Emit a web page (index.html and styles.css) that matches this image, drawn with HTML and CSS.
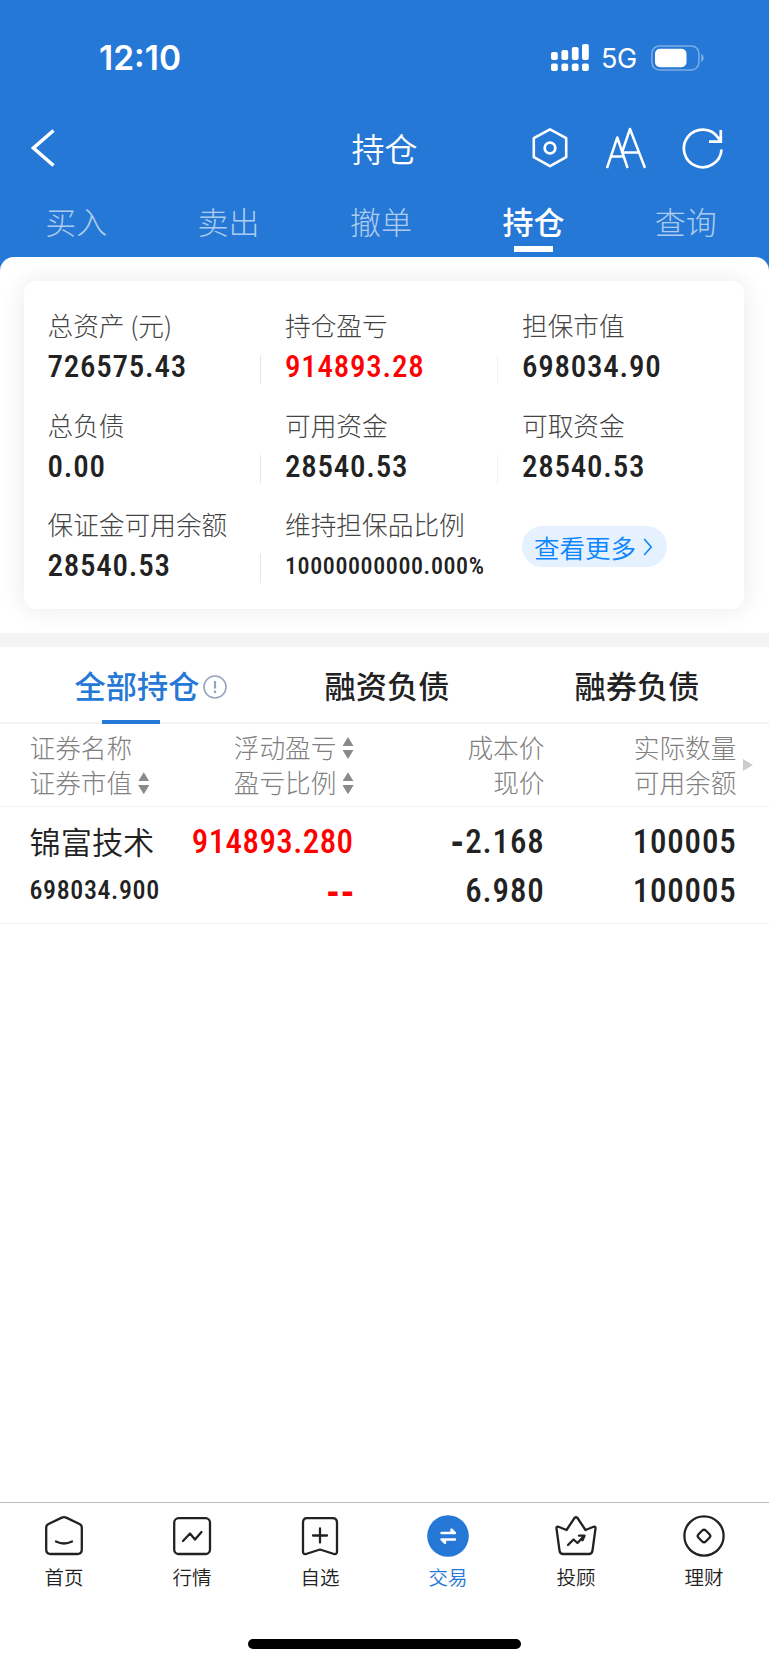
FILE: index.html
```
<!doctype html>
<html lang="zh-CN">
<head>
<meta charset="utf-8">
<meta name="viewport" content="width=device-width, initial-scale=1">
<title>持仓</title>
<link rel="stylesheet" href="styles.css">
</head>
<body>
<div class="app">
    <header class="header">
        <div class="status">
            <span class="status__time">12:10</span>
            <div class="status__right">
                <svg width="38" height="28" viewBox="0 0 38 28" fill="#fff">
                    <rect x="0" y="8" width="6.8" height="8" rx="2"/>
                    <rect x="10.4" y="6" width="6.8" height="10" rx="2"/>
                    <rect x="20.8" y="3" width="6.8" height="13" rx="2"/>
                    <rect x="31" y="0" width="6.8" height="16" rx="2"/>
                    <rect x="0" y="19.5" width="6.8" height="7.4" rx="2"/>
                    <rect x="10.4" y="19.5" width="6.8" height="7.4" rx="2"/>
                    <rect x="20.8" y="19.5" width="6.8" height="7.4" rx="2"/>
                    <rect x="31" y="19.5" width="6.8" height="7.4" rx="2"/>
                </svg>
                <span class="status__net">5G</span>
                <svg width="54" height="26" viewBox="0 0 54 26">
                    <rect x="0.9" y="0.9" width="47" height="24" rx="7.5" fill="none" stroke="#fff" stroke-opacity=".4" stroke-width="1.5"/>
                    <rect x="4" y="3.8" width="31.5" height="18.4" rx="5" fill="#fff"/>
                    <path d="M50.3 9c3 1.2 3 6.8 0 8z" fill="#fff" fill-opacity=".45"/>
                </svg>
            </div>
        </div>
        <div class="navbar">
            <svg width="24" height="40" viewBox="0 0 24 40" fill="none" stroke="#fff" stroke-width="3.6">
                <path d="M22.5 2.5L2.5 20l20 17.5"/>
            </svg>
            <h1 class="navbar__title">持仓</h1>
            <div class="navbar__actions">
                <svg width="36" height="42" viewBox="0 0 36 42" fill="none" stroke="#fff" stroke-width="2.6">
                    <path d="M18 2.4L34.2 11.200v19L18 39.200 1.800 30.200v-19z" stroke-linejoin="round"/>
                    <circle cx="18" cy="21" r="5.3" stroke-width="2.8"/>
                </svg>
                <svg width="40" height="42" viewBox="0 0 40 42" fill="none" stroke="#fff" stroke-width="2.5" stroke-linejoin="round">
                    <path d="M1 41L11.3 10.5 21.6 41M4.7 29.6H18M15.800 26L24 2l15 39M16.500 25.500H32.500"/>
                </svg>
                <svg width="42" height="42" viewBox="0 0 42 42" fill="none" stroke="#fff" stroke-width="2.7">
                    <path d="M39.5 22.5A18.8 18.8 0 1 1 36.2 10.8L38.5 14.2M38.8 3v11.700H27"/>
                </svg>
            </div>
        </div>
        <nav class="tabs">
            <a class="tabs__item">买入</a>
            <a class="tabs__item">卖出</a>
            <a class="tabs__item">撤单</a>
            <a class="tabs__item tabs__item--active">持仓</a>
            <a class="tabs__item">查询</a>
        </nav>
    </header>

    <section class="summary">
        <div class="card">
            <div class="card__cell">
                <div class="card__label">总资产 (元)</div>
                <div class="card__value">726575.43</div>
            </div>
            <div class="card__cell">
                <div class="card__label">持仓盈亏</div>
                <div class="card__value card__value--red">914893.28</div>
            </div>
            <div class="card__cell">
                <div class="card__label">担保市值</div>
                <div class="card__value">698034.90</div>
            </div>
            <div class="card__cell">
                <div class="card__label">总负债</div>
                <div class="card__value">0.00</div>
            </div>
            <div class="card__cell">
                <div class="card__label">可用资金</div>
                <div class="card__value">28540.53</div>
            </div>
            <div class="card__cell">
                <div class="card__label">可取资金</div>
                <div class="card__value">28540.53</div>
            </div>
            <div class="card__cell">
                <div class="card__label">保证金可用余额</div>
                <div class="card__value">28540.53</div>
            </div>
            <div class="card__cell card__cell--plain">
                <div class="card__label">维持担保品比例</div>
                <div class="card__value card__value--small">10000000000.000%</div>
            </div>
            <div class="card__cell">
                <a class="more">查看更多
                    <svg width="10" height="18" viewBox="0 0 10 18" fill="none" stroke="#0a84ff" stroke-width="1.6"><path d="M1.2 1l7 8-7 8"/></svg>
                </a>
            </div>
        </div>
    </section>

    <nav class="subtabs">
        <a class="subtabs__item subtabs__item--active">全部持仓
            <svg class="subtabs__info" width="24" height="24" viewBox="0 0 24 24" fill="none" stroke="#98a4bc">
                <circle cx="12" cy="12" r="11" stroke-width="1.6"/>
                <path d="M12 6v7.5M12 15.5v2.5" stroke-width="2.2"/>
            </svg>
        </a>
        <a class="subtabs__item">融资负债</a>
        <a class="subtabs__item">融券负债</a>
    </nav>

    <div class="grid grid--head">
        <div class="grid__cell">
            <span>证券名称</span>
            <span>证券市值<i class="sort"></i></span>
        </div>
        <div class="grid__cell">
            <span>浮动盈亏<i class="sort"></i></span>
            <span>盈亏比例<i class="sort"></i></span>
        </div>
        <div class="grid__cell">
            <span>成本价</span>
            <span>现价</span>
        </div>
        <div class="grid__cell">
            <span>实际数量</span>
            <span>可用余额</span>
        </div>
        <i class="grid__arrow"></i>
    </div>
    <div class="grid grid--row">
        <div class="grid__cell">
            <span class="grid__name">锦富技术</span>
            <span class="grid__small">698034.900</span>
        </div>
        <div class="grid__cell grid__cell--red">
            <span>914893.280</span>
            <span class="grid__dash">--</span>
        </div>
        <div class="grid__cell">
            <span><span class="grid__dash">-</span>2.168</span>
            <span>6.980</span>
        </div>
        <div class="grid__cell">
            <span>100005</span>
            <span>100005</span>
        </div>
    </div>

    <footer class="footer">
        <nav class="dock">
            <a class="dock__item">
                <svg width="42" height="42" viewBox="0 0 42 42">
                    <path d="M18.8 2.6q2.2-1 4.4 0L36.5 9q2.3 1.2 2.3 3.6V34.5q0 4.5-4.5 4.5H7.7q-4.5 0-4.5-4.5V12.6Q3.2 10.2 5.5 9zM13 26.500q8 4 16 0"/>
                </svg>
                首页
            </a>
            <a class="dock__item">
                <svg width="42" height="42" viewBox="0 0 42 42">
                    <rect x="3.2" y="3.2" width="35.8" height="35.8" rx="4.5"/>
                    <path d="M12 26l7-7.500 5 6 6.500-7.500"/>
                </svg>
                行情
            </a>
            <a class="dock__item">
                <svg width="42" height="42" viewBox="0 0 42 42">
                    <path d="M8 3.2H33.5q4.5 0 4.5 4.5V36.5q0 3-3 2.5L21 34.5 7 39q-3 .5-3-2.500V7.700Q4 3.200 8 3.200zM21 13.500v14M14 20.500h14"/>
                </svg>
                自选
            </a>
            <a class="dock__item dock__item--active">
                <svg width="42" height="42" viewBox="0 0 42 42">
                    <circle class="dock__disc" cx="21" cy="21" r="20.8"/>
                    <path class="dock__swap" d="M14.5 18H28L24.5 14.5V18M28 24.5H14.5L18 28V24.5"/>
                </svg>
                交易
            </a>
            <a class="dock__item">
                <svg width="42" height="42" viewBox="0 0 42 42">
                    <path d="M19.5 3q1.5-1.4 3 0l8 12 8-3.2q2.3-.5 2 1.7L37.5 35.5q-.5 3.5-3.5 3.5H8q-3 0-3.5-3.5L1.5 13.5q-.3-2.2 2-1.7l8 3.2z"/>
                    <path d="M13 30l5.5-5.5 4 3.500 6-6.500M24 20.700h5.500l-2 4.500"/>
                </svg>
                投顾
            </a>
            <a class="dock__item">
                <svg width="42" height="42" viewBox="0 0 42 42">
                    <circle cx="21" cy="21" r="19.6"/>
                    <rect x="15.9" y="15.9" width="10.2" height="10.2" rx="2.5" transform="rotate(45 21 21)"/>
                </svg>
                理财
            </a>
        </nav>
        <div class="home-bar"></div>
    </footer>
</div>
</body>
</html>
```
FILE: styles.css
```
* {
    box-sizing: border-box;
}
body {
    margin: 0;
    font-family: "Noto Sans CJK SC", sans-serif;
    color: #222;
    background-color: #fff;
}
svg {
    display: block;
    flex: none;
}
.app {
    display: flex;
    flex-direction: column;
    width: 769px;
    height: 1665px;
}

/* header */
.header {
    height: 271px;
    margin-bottom: -14px;
    background-color: #2578d5;
    color: #fff;
}
.status {
    display: flex;
    justify-content: space-between;
    height: 114px;
    padding: 38px 64px 0 99px;
    font-family: Inter, sans-serif;
}
.status__time {
    font-size: 33.5px;
    line-height: 41px;
    font-weight: 600;
}
.status__right {
    display: flex;
    align-items: center;
    height: 40px;
}
.status__net {
    margin: 1px 15px 0 12px;
    width: 35px;
    font-size: 27px;
    line-height: 32px;
    letter-spacing: -0.5px;
}
.navbar {
    display: grid;
    grid-template-columns: 1fr auto 1fr;
    align-items: center;
    height: 68px;
    padding: 0 45px 0 31px;
}
.navbar__title {
    margin: 0 0 0 14px;
    font-size: 33px;
    line-height: 48px;
    font-weight: 350;
}
.navbar__actions {
    display: flex;
    justify-content: flex-end;
    gap: 36px;
}
.navbar__actions svg:first-child {
    margin-right: 2px;
}
.tabs {
    display: grid;
    grid-template-columns: repeat(5, 1fr);
    height: 75px;
    padding-right: 7px;
    font-size: 31px;
    line-height: 77px;
    text-align: center;
}
.tabs__item {
    position: relative;
    color: rgba(255, 255, 255, 0.63);
    font-weight: 300;
}
.tabs__item--active {
    color: #fff;
    font-weight: 500;
}
.tabs__item--active::after {
    content: '';
    position: absolute;
    left: 57px;
    top: 64px;
    width: 39px;
    height: 6px;
    background-color: #fff;
}

/* account summary */
.summary {
    height: 376px;
    padding: 24px 25px 0 24px;
    background-color: #fff;
    border-radius: 14px 14px 0 0;
    overflow: hidden;
}
.card {
    display: grid;
    grid-template-columns: 237.5px 237px 1fr;
    grid-auto-rows: 99.6px;
    height: 328px;
    padding: 26px 0 0 23.5px;
    border-radius: 12px;
    background-color: #fff;
    box-shadow: 0 0 26px rgba(0, 0, 0, 0.09);
}
.card__cell {
    position: relative;
}
.card__cell:nth-child(3n+1)::after,
.card__cell:nth-child(3n+2)::after {
    content: '';
    position: absolute;
    top: 48px;
    right: 24px;
    width: 1px;
    height: 29px;
    background-color: #e6e6e6;
}
.card__cell:nth-child(3n+2)::after {
    background-color: #f2f2f2;
}
.card__cell--plain::after {
    visibility: hidden;
}
.card__label {
    font-size: 25.7px;
    line-height: 36px;
    font-weight: 300;
    color: #444;
    white-space: nowrap;
}
.card__value {
    font-family: Roboto, sans-serif;
    font-stretch: 87.5%;
    font-size: 31px;
    line-height: 48px;
    font-weight: 500;
    letter-spacing: 0.75px;
}
.card__value--red {
    color: #f00;
}
.card__value--small {
    font-size: 24px;
    letter-spacing: 0.6px;
}
.more {
    display: inline-flex;
    align-items: center;
    gap: 7px;
    height: 41px;
    margin-top: 20px;
    padding: 0 14px 0 12px;
    border-radius: 21px;
    background-color: #e5f1ff;
    color: #0a84ff;
    font-size: 25.5px;
    line-height: 36px;
    font-weight: 350;
}

/* holdings */
.subtabs {
    display: flex;
    height: 91px;
    padding: 0 0 0 12px;
    border-top: 14px solid #f4f4f4;
    border-bottom: 2px solid #f3f3f3;
    font-size: 31.2px;
    line-height: 75px;
    font-weight: 500;
    text-align: center;
}
.subtabs__item {
    position: relative;
    width: 250px;
}
.subtabs__item--active {
    color: #2578d5;
}
.subtabs__item--active::after {
    content: '';
    position: absolute;
    left: 90px;
    bottom: -2px;
    width: 58px;
    height: 4px;
    background-color: #2578d5;
}
.subtabs__info {
    position: absolute;
    left: 191px;
    top: 28px;
}
.grid {
    display: grid;
    grid-template-columns: 156px 168px 191px 192px;
    position: relative;
    padding-left: 29.5px;
}
.grid__cell {
    display: flex;
    flex-direction: column;
    align-items: flex-end;
    white-space: nowrap;
}
.grid__cell:first-child {
    align-items: flex-start;
}
.grid--head {
    height: 83px;
    padding-top: 5px;
    border-bottom: 1px solid #f3f3f3;
    font-size: 25.7px;
    line-height: 35.3px;
    font-weight: 300;
    color: #808080;
}
.grid--row {
    height: 117px;
    padding-top: 10px;
    border-bottom: 1px solid #f3f3f3;
    font-family: Roboto, sans-serif;
    font-stretch: 87.5%;
    font-size: 33px;
    line-height: 49px;
    font-weight: 500;
    letter-spacing: 0.8px;
}
.grid__name {
    margin: -1px 0 1px;
    font-family: "Noto Sans CJK SC", sans-serif;
    font-size: 31.2px;
    font-weight: 350;
    letter-spacing: 0;
}
.grid__small {
    font-size: 26px;
    letter-spacing: 0.6px;
}
.grid__cell--red {
    color: #f00;
    letter-spacing: 0.4px;
}
.grid__dash {
    font-family: "Liberation Sans", sans-serif;
    font-size: 37px;
    line-height: 1;
    font-weight: 700;
    letter-spacing: 2px;
}
.grid__cell > .grid__dash {
    line-height: 49px;
    margin-right: -2px;
}
.sort {
    display: inline-block;
    width: 11px;
    height: 22px;
    margin-left: 6px;
    vertical-align: -1px;
    background:
        linear-gradient(#8a8a8a, #8a8a8a) 0 0 / 11px 9px,
        linear-gradient(#8a8a8a, #8a8a8a) 0 100% / 11px 9px;
    background-repeat: no-repeat;
    clip-path: polygon(50% 0, 100% 41%, 100% 59%, 50% 100%, 0 59%, 0 41%);
}
.grid__arrow {
    position: absolute;
    left: 743px;
    top: 35px;
    border-left: 10px solid #ccc;
    border-top: 6.5px solid transparent;
    border-bottom: 6.5px solid transparent;
}

/* bottom dock */
.footer {
    margin-top: auto;
    height: 163px;
    border-top: 1px solid #bbb;
}
.dock {
    display: grid;
    grid-template-columns: repeat(6, 1fr);
    height: 136px;
    padding: 12px 1px 0 0;
}
.dock__item {
    display: flex;
    flex-direction: column;
    align-items: center;
    font-size: 19.5px;
    line-height: 39px;
    font-weight: 350;
}
.dock__item svg {
    fill: none;
    stroke: #222;
    stroke-width: 2.3;
    stroke-linecap: round;
    stroke-linejoin: round;
}
.dock__item--active {
    color: #2578d5;
}
.dock__item .dock__disc {
    fill: #2578d5;
    stroke: none;
}
.dock__item .dock__swap {
    stroke: #fff;
    stroke-width: 2.4;
}
.home-bar {
    width: 273px;
    height: 10px;
    margin: 0 auto;
    border-radius: 5px;
    background-color: #000;
}
```
